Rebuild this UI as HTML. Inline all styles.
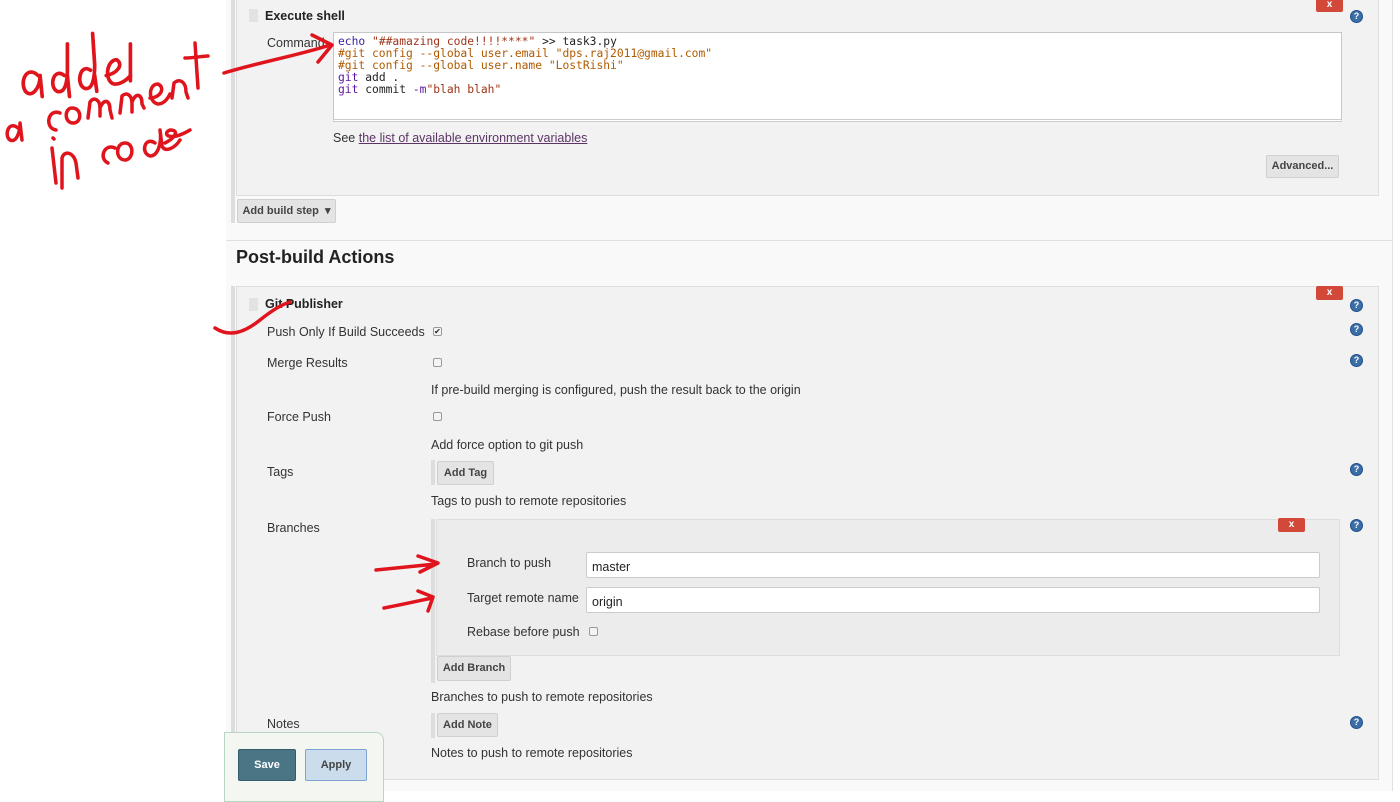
<!DOCTYPE html>
<html><head><meta charset="utf-8"><style>
*{box-sizing:border-box;margin:0;padding:0}
body{width:1400px;height:791px;overflow:hidden;background:#fff;font-family:"Liberation Sans",Arial,sans-serif;font-size:13px;color:#333;position:relative}
.a{position:absolute}
.btn{position:absolute;background:#e4e4e4;border:1px solid #d0d0d0;border-radius:2px;font-size:11px;font-weight:bold;color:#444;text-align:center}
.x{position:absolute;width:27px;height:14px;background:#d24939;border-radius:2px;color:#fff;font-size:10px;font-weight:bold;text-align:center;line-height:13px}
.q{position:absolute;width:13px;height:13px;border-radius:50%;background:#3a6ea8;border:1px solid #23508a;color:#fff;font-size:9px;font-weight:bold;text-align:center;line-height:11px}
.cb{position:absolute;width:9px;height:9px;border:1px solid #999;border-radius:2px;background:#f4f4f4}
.lbl{position:absolute;font-size:12.5px;color:#333}
.inp{position:absolute;background:#fff;border:1px solid #ccc;border-radius:2px;font-size:12.5px;padding:7px 5px;color:#222}
.grip{position:absolute;width:9px;height:13px;background-image:radial-gradient(#bbb 0.7px,transparent 0.8px);background-size:2px 2px}
.sm{font-size:12.5px}
</style></head><body>
<div class="a" style="left:226px;top:0;width:1166px;height:791px;background:#f9f9f9"></div>
<div class="a" style="left:1392px;top:0;width:1px;height:791px;background:#e2e2e2"></div>
<div class="a" style="left:231px;top:0;width:4px;height:223px;background:#ddd"></div>
<div class="a" style="left:236px;top:-2px;width:1143px;height:198px;background:#f2f2f2;border:1px solid #ddd"></div>
<div class="grip" style="left:249px;top:9px"></div>
<div class="a" style="left:265px;top:9px;font-weight:bold;font-size:12.5px;color:#222">Execute shell</div>
<div class="x" style="left:1316px;top:-2px">x</div>
<div class="q" style="left:1350px;top:10px">?</div>
<div class="lbl" style="left:267px;top:36px">Command</div>
<div class="a" style="left:333px;top:32px;width:1009px;height:90px;background:#fff;border:1px solid #c6c6c6;border-bottom:3px double #ccc"></div>
<pre class="a" style="left:338px;top:36px;font-family:'DejaVu Sans Mono','Liberation Mono',monospace;font-size:11.3px;line-height:12px"><span style="color:#3b1f9e">echo</span> <span style="color:#a0341a">"##amazing code!!!!****"</span> <span style="color:#222">&gt;&gt; task3.py</span>
<span style="color:#b05a00">#git config --global user.email "dps.raj2011@gmail.com"</span>
<span style="color:#b05a00">#git config --global user.name "LostRishi"</span>
<span style="color:#5a14a0">git</span> <span style="color:#222">add .</span>
<span style="color:#5a14a0">git</span> <span style="color:#222">commit</span> <span style="color:#5a14a0">-m</span><span style="color:#a0341a">"blah blah"</span></pre>
<div class="a sm" style="left:333px;top:131px">See <span style="text-decoration:underline;color:#5c3566">the list of available environment variables</span></div>
<div class="btn" style="left:1266px;top:155px;width:73px;height:23px;line-height:21px">Advanced...</div>
<div class="btn" style="left:237px;top:199px;width:99px;height:24px;line-height:22px">Add build step &nbsp;▾</div>
<div class="a" style="left:226px;top:240px;width:1166px;height:1px;background:#e0e0e0"></div>
<div class="a" style="left:236px;top:247px;font-size:18px;font-weight:bold;color:#222">Post-build Actions</div>
<div class="a" style="left:231px;top:286px;width:4px;height:505px;background:#ddd"></div>
<div class="a" style="left:236px;top:286px;width:1143px;height:494px;background:#f2f2f2;border:1px solid #ddd"></div>
<div class="grip" style="left:249px;top:298px"></div>
<div class="a" style="left:265px;top:297px;font-weight:bold;font-size:12.5px;color:#222">Git Publisher</div>
<div class="x" style="left:1316px;top:286px">x</div>
<div class="q" style="left:1350px;top:299px">?</div>
<div class="q" style="left:1350px;top:323px">?</div>
<div class="q" style="left:1350px;top:354px">?</div>
<div class="q" style="left:1350px;top:463px">?</div>
<div class="q" style="left:1350px;top:519px">?</div>
<div class="q" style="left:1350px;top:716px">?</div>
<div class="lbl" style="left:267px;top:325px">Push Only If Build Succeeds</div>
<div class="cb" style="left:433px;top:327px;font-size:8px;line-height:7px;text-align:center;color:#222">✔</div>
<div class="lbl" style="left:267px;top:356px">Merge Results</div>
<div class="cb" style="left:433px;top:358px"></div>
<div class="lbl" style="left:431px;top:383px">If pre-build merging is configured, push the result back to the origin</div>
<div class="lbl" style="left:267px;top:410px">Force Push</div>
<div class="cb" style="left:433px;top:412px"></div>
<div class="lbl" style="left:431px;top:438px">Add force option to git push</div>
<div class="lbl" style="left:267px;top:465px">Tags</div>
<div class="a" style="left:431px;top:460px;width:4px;height:25px;background:#ddd"></div>
<div class="btn" style="left:437px;top:461px;width:57px;height:24px;line-height:22px">Add Tag</div>
<div class="lbl" style="left:431px;top:494px">Tags to push to remote repositories</div>
<div class="lbl" style="left:267px;top:521px">Branches</div>
<div class="a" style="left:431px;top:519px;width:4px;height:164px;background:#ddd"></div>
<div class="a" style="left:436px;top:519px;width:904px;height:137px;background:#ececec;border:1px solid #ddd"></div>
<div class="x" style="left:1278px;top:518px">x</div>
<div class="lbl" style="left:467px;top:556px">Branch to push</div>
<div class="inp" style="left:586px;top:552px;width:734px;height:26px">master</div>
<div class="lbl" style="left:467px;top:591px">Target remote name</div>
<div class="inp" style="left:586px;top:587px;width:734px;height:26px">origin</div>
<div class="lbl" style="left:467px;top:625px">Rebase before push</div>
<div class="cb" style="left:589px;top:627px"></div>
<div class="btn" style="left:437px;top:656px;width:74px;height:25px;line-height:23px">Add Branch</div>
<div class="lbl" style="left:431px;top:690px">Branches to push to remote repositories</div>
<div class="lbl" style="left:267px;top:717px">Notes</div>
<div class="a" style="left:431px;top:713px;width:4px;height:25px;background:#ddd"></div>
<div class="btn" style="left:437px;top:713px;width:61px;height:24px;line-height:22px">Add Note</div>
<div class="lbl" style="left:431px;top:746px">Notes to push to remote repositories</div>
<div class="a" style="left:224px;top:732px;width:160px;height:70px;background:#f3f6f1;border:1px solid #b9d6c2;border-radius:0 8px 0 0"></div>
<div class="a" style="left:238px;top:749px;width:58px;height:32px;background:#497584;border:1px solid #335d6a;border-radius:2px;color:#fff;font-weight:bold;font-size:11px;text-align:center;line-height:30px">Save</div>
<div class="a" style="left:305px;top:749px;width:62px;height:32px;background:#cbdcec;border:1px solid #7da4d2;border-radius:2px;color:#444;font-weight:bold;font-size:11px;text-align:center;line-height:30px">Apply</div>
<svg class="a" style="left:0;top:0" width="1400" height="791" fill="none" stroke="#e0141c" stroke-width="3.5" stroke-linecap="round" stroke-linejoin="round">
<g transform="translate(-4,2) scale(1.05)">
<path d="M40 70 C30 60 22 75 28 85 C34 92 42 82 42 70 L44 90"/>
<path d="M65 70 C55 62 50 80 58 85 C66 88 68 75 68 65 L68 40 M68 70 L70 90"/>
<path d="M90 65 C80 58 76 78 84 82 C92 85 94 72 94 60 L92 30 M94 70 L96 85"/>
<path d="M105 70 C115 68 122 60 115 55 C105 55 103 75 112 78 C118 79 125 74 128 70"/>
<path d="M128 40 L128 75"/>
</g>
<g transform="translate(0,8)">
<path d="M18 120 C8 112 4 128 10 132 C16 135 20 125 20 115 L22 132"/>
<path d="M60 105 C48 100 44 120 56 122"/>
<path d="M72 100 C64 100 64 116 74 115 C82 114 82 100 72 100"/>
<path d="M88 110 L90 94 C94 88 100 92 100 100 L100 108 M100 100 C104 90 110 92 110 102 L112 110"/>
<path d="M120 105 L122 88 C126 84 132 86 132 96 L132 104 M132 94 C136 84 142 86 142 96 L144 100"/>
<path d="M150 90 C160 90 166 80 158 76 C148 76 148 94 158 96 C164 96 168 90 170 86"/>
<path d="M172 90 L174 75 C180 70 186 74 186 84 L188 90"/>
<path d="M195 35 L198 80 M185 50 C195 50 202 48 208 48"/>
</g>
<g transform="translate(0,18)">
<path d="M52 130 L56 165 M53 120 L54 121"/>
<path d="M62 170 L62 140 C64 132 74 134 76 145 L78 160"/>
<path d="M115 130 C105 125 98 140 108 145"/>
<path d="M125 125 C115 125 115 143 126 142 C134 140 134 125 125 125"/>
<path d="M155 125 C145 118 140 135 150 138 C158 138 162 125 160 112 L162 128 C165 135 175 130 180 122 M165 125 C175 120 180 112 170 112 C162 115 168 125 190 112"/>
</g>
<path d="M224 73 C260 62 300 55 330 45 M312 35 L332 45 L318 62"/>
<path d="M215 328 C230 338 245 332 260 320 C270 312 280 305 290 302"/>
<path d="M376 570 C395 568 415 566 436 564 M418 556 L438 563 L420 572"/>
<path d="M384 608 C400 605 418 601 432 598 M418 591 L433 597 L428 611"/>
</svg>
</body></html>
